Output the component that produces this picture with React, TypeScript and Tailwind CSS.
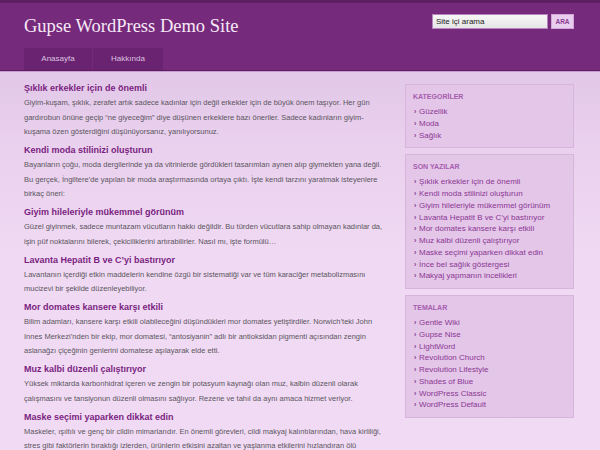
import React from "react";

const posts = [
  {
    title: "Şıklık erkekler için de önemli",
    excerpt:
      "Giyim-kuşam, şıklık, zerafet artık sadece kadınlar için değil erkekler için de büyük önem taşıyor. Her gün gardırobun önüne geçip “ne giyeceğim” diye düşünen erkeklere bazı öneriler. Sadece kadınların giyim-kuşama özen gösterdiğini düşünüyorsanız, yanılıyorsunuz.",
  },
  {
    title: "Kendi moda stilinizi oluşturun",
    excerpt:
      "Bayanların çoğu, moda dergilerinde ya da vitrinlerde gördükleri tasarımları aynen alıp giymekten yana değil. Bu gerçek, İngiltere’de yapılan bir moda araştırmasında ortaya çıktı. İşte kendi tarzını yaratmak isteyenlere birkaç öneri:",
  },
  {
    title: "Giyim hileleriyle mükemmel görünüm",
    excerpt:
      "Güzel giyinmek, sadece muntazam vücutların hakkı değildir. Bu türden vücutlara sahip olmayan kadınlar da, işin püf noktalarını bilerek, çekiciliklerini artırabilirler. Nasıl mı, işte formülü…",
  },
  {
    title: "Lavanta Hepatit B ve C’yi bastırıyor",
    excerpt:
      "Lavantanın içerdiği etkin maddelerin kendine özgü bir sistematiği var ve tüm karaciğer metabolizmasını mucizevi bir şekilde düzenleyebiliyor.",
  },
  {
    title: "Mor domates kansere karşı etkili",
    excerpt:
      "Bilim adamları, kansere karşı etkili olabileceğini düşündükleri mor domates yetiştirdiler. Norwich’teki John Innes Merkezi’nden bir ekip, mor domatesi, “antosiyanin” adlı bir antioksidan pigmenti açısından zengin aslanağzı çiçeğinin genlerini domatese aşılayarak elde etti.",
  },
  {
    title: "Muz kalbi düzenli çalıştırıyor",
    excerpt:
      "Yüksek miktarda karbonhidrat içeren ve zengin bir potasyum kaynağı olan muz, kalbin düzenli olarak çalışmasını ve tansiyonun düzenli olmasını sağlıyor. Rezene ve tahıl da aynı amaca hizmet veriyor.",
  },
  {
    title: "Maske seçimi yaparken dikkat edin",
    excerpt:
      "Maskeler, ışıltılı ve genç bir cildin mimarlarıdır. En önemli görevleri, cildi makyaj kalıntılarından, hava kirliliği, stres gibi faktörlerin bıraktığı izlerden, ürünlerin etkisini azaltan ve yaşlanma etkilerini hızlandıran ölü derilerden arındırmaktır. Peki maske seçerken nelere dikkat etmeli?",
  },
];

const widgets = [
  { title: "KATEGORİLER", items: ["Güzellik", "Moda", "Sağlık"] },
  {
    title: "SON YAZILAR",
    items: [
      "Şıklık erkekler için de önemli",
      "Kendi moda stilinizi oluşturun",
      "Giyim hileleriyle mükemmel görünüm",
      "Lavanta Hepatit B ve C’yi bastırıyor",
      "Mor domates kansere karşı etkili",
      "Muz kalbi düzenli çalıştırıyor",
      "Maske seçimi yaparken dikkat edin",
      "İnce bel sağlık göstergesi",
      "Makyaj yapmanın incelikleri",
    ],
  },
  {
    title: "TEMALAR",
    items: [
      "Gentle Wiki",
      "Gupse Nise",
      "LightWord",
      "Revolution Church",
      "Revolution Lifestyle",
      "Shades of Blue",
      "WordPress Classic",
      "WordPress Default",
    ],
  },
];

function Widget({ title, items }: { title: string; items: string[] }) {
  return (
    <div className="border border-[#d7b5dd] bg-[#e3c6e8] px-[7px] pt-[6px] pb-[6px]">
      <h3 className="mb-[3px] text-[7px] font-bold leading-[12px] text-[#a75dae]">{title}</h3>
      <ul>
        {items.map((item) => (
          <li key={item} className="flex items-center text-[8px] leading-[11.75px] text-[#8b3893]">
            <span className="w-[6px] pl-[1px] text-[7px] font-bold text-[#84358c]">›</span>
            <span>{item}</span>
          </li>
        ))}
      </ul>
    </div>
  );
}

export default function App() {
  return (
    <div className="h-[450px] w-[600px] overflow-hidden bg-[linear-gradient(to_bottom,#dbbfe3_0px,#e9d0ed_140px,#f0daf3_260px,#f1dbf4_100%)] font-['Liberation_Sans',Arial,sans-serif]">
      {/* header */}
      <header className="border-t-[3px] border-[#5d1e63] bg-[#762a7b]">
        <div className="flex h-[67px] justify-between pl-[24px] pr-[26px]">
          <div className="flex flex-col justify-between">
            <h1 className="pt-[12px] font-['Liberation_Serif',Georgia,serif] text-[18.5px] leading-[22px] text-[#f6e9f7]">
              Gupse WordPress Demo Site
            </h1>
            <nav className="flex gap-[1px]">
              <a className="flex h-[22px] w-[68px] items-center justify-center bg-[#6a2370] text-[8px] text-[#dcc2e0]">
                Anasayfa
              </a>
              <a className="flex h-[22px] w-[70px] items-center justify-center bg-[#6a2370] text-[8px] text-[#dcc2e0]">
                Hakkında
              </a>
            </nav>
          </div>
          <form className="flex items-start gap-[3px] pt-[11px]">
            <input
              readOnly
              value="Site içi arama"
              className="h-[15px] w-[116px] border border-[#b884bf] bg-[linear-gradient(to_bottom,#f7f7f7,#e6e6e6)] px-[3px] text-[8px] text-[#222] outline-none"
            />
            <button
              type="button"
              className="h-[15px] w-[23px] border border-[#d3a6d9] bg-[#e9cdee] text-[6.5px] font-bold text-[#8a3d91]"
            >
              ARA
            </button>
          </form>
        </div>
        <div className="h-[1px] bg-[#5d1e63]" />
        <div className="h-[1px] bg-[#c89ad0]" />
      </header>

      {/* content + sidebar */}
      <div className="flex gap-[15px] pl-[24px]">
        <main className="w-[366px] pt-[9px]">
          {posts.map((post) => (
            <article key={post.title} className="mb-[3.5px]">
              <h2 className="text-[9px] font-bold leading-[15px] text-[#7a1e81]">{post.title}</h2>
              <p className="text-[7.5px] leading-[14.5px] text-[#5b5560]">{post.excerpt}</p>
            </article>
          ))}
        </main>
        <aside className="flex w-[169px] flex-col gap-[6px] pt-[12px]">
          {widgets.map((w) => (
            <Widget key={w.title} title={w.title} items={w.items} />
          ))}
        </aside>
      </div>
    </div>
  );
}
